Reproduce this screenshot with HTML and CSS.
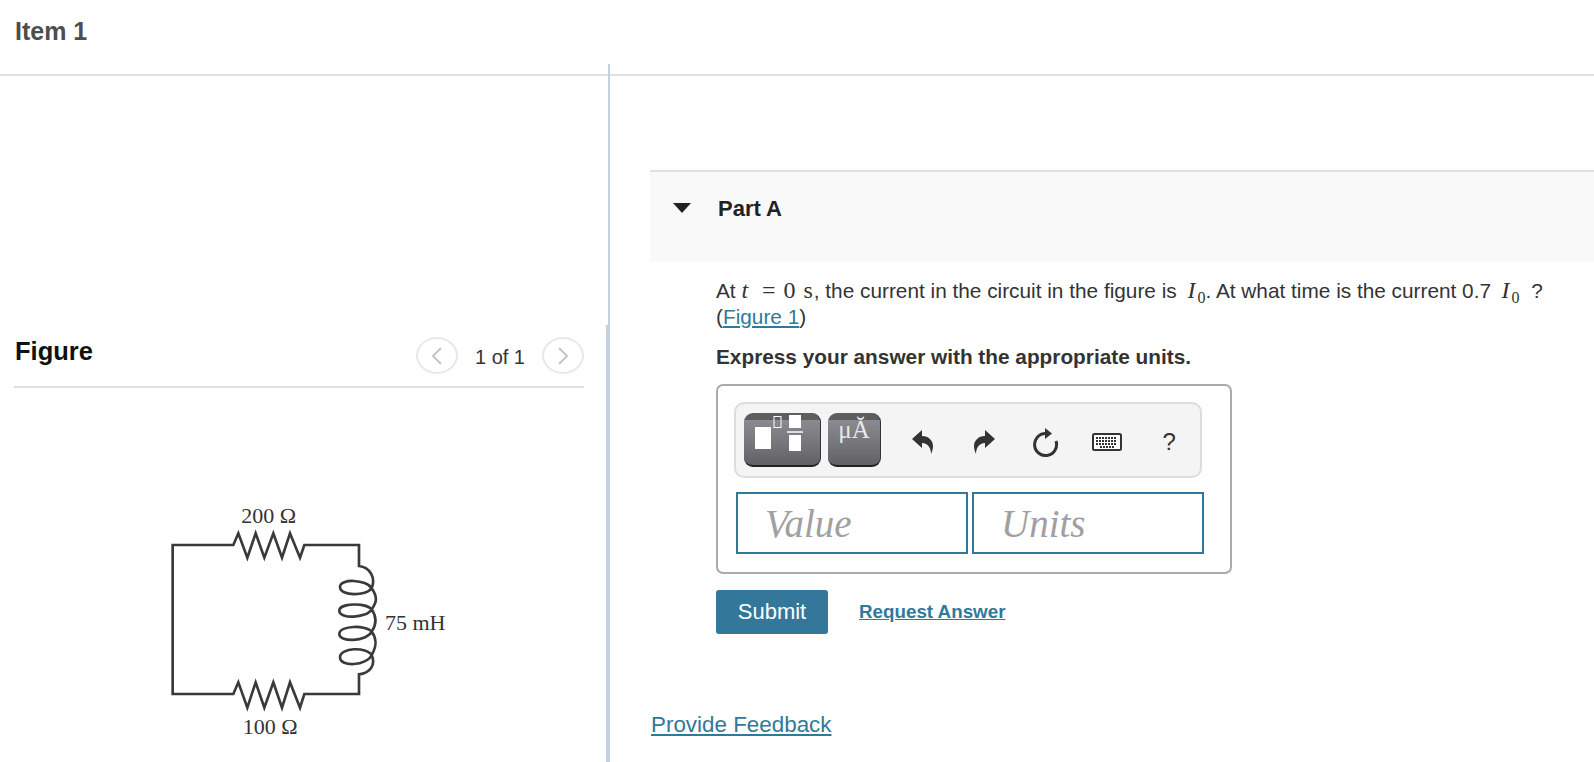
FILE: index.html
```html
<!DOCTYPE html>
<html lang="en">
<head>
    <meta charset="UTF-8">
    <title>Item 1</title>
    <link rel="stylesheet" href="styles.css">
</head>
<body>
    <header class="topo">
        <h1>Item 1</h1>
    </header>
    <span class="divisor-fino"></span>
    <main class="colunas">
        <section class="figura">
            <div class="figura-topo">
                <h2>Figure</h2>
                <div class="paginacao">
                    <button class="seta"><svg width="12" height="20" viewBox="0 0 12 20"><path d="M10 2 L2 10 L10 18"/></svg></button>
                    <span class="contagem">1 of 1</span>
                    <button class="seta"><svg width="12" height="20" viewBox="0 0 12 20"><path d="M2 2 L10 10 L2 18"/></svg></button>
                </div>
            </div>
            <svg class="circuito" width="320" height="272" viewBox="0 0 960 816">
                <path class="fio" d="M280 165 H98 V612 H280 L295 577 L322 653 L347 577 L373 653 L400 577 L426 653 L450 577 L480 653 L493 612 H657 V553 C690 550 708 525 695 495 C680 470 600 472 600 502 C600 532 680 528 695 495 C712 465 710 445 695 425 C680 405 598 405 598 432 C598 458 680 455 695 425 C712 400 710 380 695 358 C680 338 598 338 598 362 C598 388 680 385 695 358 C712 335 712 320 695 295 C680 268 600 265 600 290 C600 320 680 318 695 295 C708 262 690 232 657 228 V165 H493 L480 203 L450 130 L426 203 L400 130 L373 203 L347 130 L322 203 L295 130 Z"/>
                <text x="304" y="98">200 Ω</text>
                <text x="735" y="420">75 mH</text>
                <text x="308" y="732">100 Ω</text>
            </svg>
        </section>
        <section class="questao">
            <div class="parte">
                <span class="triangulo"></span>
                <h3>Part A</h3>
            </div>
            <div class="conteudo">
                <p class="enunciado">At <i class="mat">t</i> <span class="mat igual">= 0 s</span>, the current in the circuit in the figure is <i class="mat letra">I</i><sub class="mat">0</sub>. At what time is the current 0.7 &nbsp;<i class="mat letra letra-fim">I</i><sub class="mat sub-fim">0</sub> ?<br>(<a href="#">Figure 1</a>)</p>
                <p class="instrucao">Express your answer with the appropriate units.</p>
                <div class="caixa">
                    <div class="ferramentas">
                        <button class="botao botao-modelo">
                            <svg width="77" height="54" viewBox="0 0 77 54">
                                <rect x="11" y="14" width="16" height="22" fill="#fff"/>
                                <rect x="30" y="3.5" width="7" height="11" fill="none" stroke="#fff"/>
                                <rect x="45" y="2" width="12" height="13" fill="#fff"/>
                                <rect x="43" y="18" width="16" height="2" fill="#ddd"/>
                                <rect x="45" y="22" width="12" height="16" fill="#fff"/>
                            </svg>
                        </button>
                        <button class="botao botao-simbolo">μĂ</button>
                        <span class="icone">
                            <svg width="21" height="24" viewBox="0 0 21 24"><path d="M0 9 L10 0 V6 C17 6 21 11 21 16 C21 19 20 22 19 24 C19 18 16 13 10 13 V18 Z"/></svg>
                        </span>
                        <span class="icone">
                            <svg width="21" height="24" viewBox="0 0 21 24"><path d="M21 9 L11 0 V6 C4 6 0 11 0 16 C0 19 1 22 2 24 C2 18 5 13 11 13 V18 Z"/></svg>
                        </span>
                        <span class="icone">
                            <svg width="26" height="29" viewBox="0 0 26 29"><path class="traco" d="M12.5 5.5 A11 11 0 1 0 23 13"/><path d="M12 0 L19 5.5 L12 11 Z"/></svg>
                        </span>
                        <span class="icone">
                            <svg width="30" height="18" viewBox="0 0 30 18">
                                <rect x="1" y="1" width="28" height="16" rx="1.5" fill="#fff" stroke="#333" stroke-width="2"/>
                                <path class="teclas" d="M4 5 H24 M4 8 H25 M4 11 H25 M8 14 H22"/>
                            </svg>
                        </span>
                        <span class="icone ajuda">?</span>
                    </div>
                    <div class="campos">
                        <input class="campo" type="text" placeholder="Value">
                        <input class="campo" type="text" placeholder="Units">
                    </div>
                </div>
                <div class="acoes">
                    <button class="enviar">Submit</button>
                    <a class="pedir" href="#">Request Answer</a>
                </div>
            </div>
            <a class="feedback" href="#">Provide Feedback</a>
        </section>
    </main>
</body>
</html>
```

FILE: styles.css
```css
*{
    box-sizing: border-box;
    margin: 0;
    padding: 0;
}
body{
    height: 762px;
    overflow: hidden;
    position: relative;
    background-color: white;
    font-family: "Liberation Sans", Arial, sans-serif;
    color: #333;
}
a{
    color: #2f7a9b;
}
.topo{
    height: 76px;
    padding: 17px 15px 0;
    border-bottom: 2px solid #e0e0e0;
}
.topo h1{
    font-size: 25px;
    line-height: 28px;
    color: #4d4d4d;
}
.divisor-fino{
    position: absolute;
    left: 608px;
    top: 64px;
    height: 262px;
    width: 2px;
    background-color: #c3d0e0;
}
.colunas{
    display: flex;
    height: 686px;
}
.figura{
    width: 610px;
    height: 686px;
    padding: 250px 26px 0 14px;
    position: relative;
}
.figura::after{
    content: "";
    position: absolute;
    right: 0;
    top: 249px;
    bottom: 0;
    width: 4px;
    background-color: #c3d0e0;
}
.figura-topo{
    display: flex;
    justify-content: space-between;
    align-items: flex-start;
    height: 62px;
    border-bottom: 2px solid #e0e0e0;
}
.figura-topo h2{
    font-size: 25.5px;
    line-height: 50px;
    color: #111;
    padding-left: 1px;
}
.paginacao{
    display: flex;
    align-items: center;
    gap: 17px;
    padding-top: 11px;
    font-size: 20px;
}
.contagem{
    padding-top: 3px;
}
.seta{
    width: 42px;
    height: 37px;
    border: 2px solid #e8e8e8;
    border-radius: 50%;
    background-color: white;
    display: flex;
    align-items: center;
    justify-content: center;
}
.seta path{
    fill: none;
    stroke: #c4c4c4;
    stroke-width: 2;
}
.circuito{
    display: block;
    margin: 102px 0 0 126px;
}
.fio{
    fill: none;
    stroke: #3a3a3a;
    stroke-width: 8;
}
.circuito text{
    font-family: "Liberation Serif", serif;
    font-size: 66px;
    fill: #333;
}
.questao{
    flex: 1;
    padding: 94px 0 0 40px;
}
.parte{
    display: flex;
    align-items: flex-start;
    height: 92px;
    padding: 24px 0 0 24px;
    background-color: #f9f9f9;
    border-top: 2px solid #e0e0e0;
}
.triangulo{
    width: 0;
    height: 0;
    margin-top: 7px;
    margin-left: -1px;
    border-left: 9px solid transparent;
    border-right: 9px solid transparent;
    border-top: 10px solid #222;
}
.parte h3{
    margin-left: 27px;
    font-size: 22px;
    line-height: 26px;
    color: #222;
}
.conteudo{
    padding: 15px 0 0 66px;
}
.enunciado{
    font-size: 20.8px;
    line-height: 26px;
}
.mat{
    font-family: "Liberation Serif", serif;
    font-size: 24px;
}
.igual{
    word-spacing: 2px;
    margin-left: 8px;
    margin-right: 1px;
}
.letra{
    margin: 0 2px 0 5px;
}
.letra-fim{
    margin-left: -1px;
}
sub.mat{
    font-size: 16px;
    line-height: 0;
}
.sub-fim{
    margin-right: 6px;
}
.instrucao{
    margin-top: 14px;
    font-size: 20.8px;
    line-height: 26px;
    font-weight: bold;
}
.caixa{
    width: 516px;
    height: 190px;
    margin-top: 14px;
    padding: 16px 16px 0 16px;
    border: 2px solid #aaa;
    border-radius: 7px;
}
.ferramentas{
    display: flex;
    align-items: center;
    width: 468px;
    height: 76px;
    padding: 4px 0 0 8px;
    background-color: #f4f4f4;
    border: 2px solid #ddd;
    border-radius: 10px;
}
.botao{
    height: 54px;
    margin-top: -4px;
    border: none;
    border-bottom: 2px solid #222;
    border-right: 1px solid #333;
    border-radius: 9px;
    background: linear-gradient(#5e5e5e 7px, #8a8a90 7px, #626266);
}
.botao-modelo{
    width: 77px;
    overflow: hidden;
}
.botao-modelo svg{
    display: block;
}
.botao-simbolo{
    width: 54px;
    margin-left: 7px;
    margin-right: 10px;
    padding-bottom: 18px;
    font-family: "Liberation Serif", serif;
    font-size: 25px;
    color: #e8e8e8;
}
.icone{
    width: 62px;
    display: flex;
    justify-content: center;
    fill: #333;
}
.traco{
    fill: none;
    stroke: #333;
    stroke-width: 3;
}
.teclas{
    fill: none;
    stroke: #333;
    stroke-width: 2;
    stroke-dasharray: 2 1;
}
.ajuda{
    font-size: 24px;
    color: #333;
}
.campos{
    display: flex;
    gap: 4px;
    margin-top: 14px;
    padding-left: 2px;
}
.campo{
    width: 232px;
    height: 62px;
    padding-left: 27px;
    border: 2px solid #2f7a9b;
    outline: none;
    font-family: "Liberation Serif", serif;
    font-style: italic;
    font-size: 39px;
}
.campo::placeholder{
    color: #a0a0a0;
    opacity: 1;
}
.acoes{
    display: flex;
    align-items: flex-start;
    margin-top: 16px;
}
.enviar{
    width: 112px;
    height: 44px;
    border: none;
    border-radius: 3px;
    background-color: #33789a;
    color: white;
    font-family: "Liberation Sans", Arial, sans-serif;
    font-size: 22px;
}
.pedir{
    margin: 10px 0 0 31px;
    font-size: 18.8px;
    font-weight: bold;
    line-height: 24px;
}
.feedback{
    display: inline-block;
    margin: 77px 0 0 1px;
    font-size: 22.4px;
    line-height: 28px;
}
```
